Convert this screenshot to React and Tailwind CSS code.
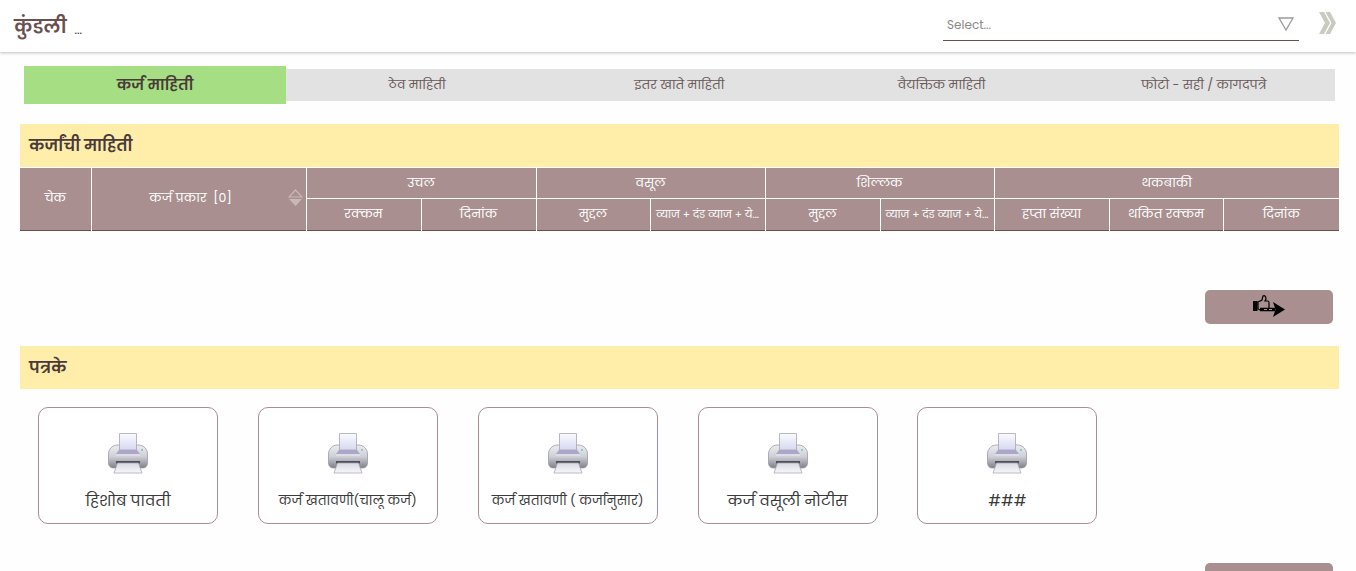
const FONT = "font-['Poppins','Noto_Sans','Liberation_Sans',sans-serif]";

const TABS = ["ठेव माहिती", "इतर खाते माहिती", "वैयक्तिक माहिती", "फोटो - सही / कागदपत्रे"];

const GROUPS = [
  { label: "उचल", span: 2 },
  { label: "वसूल", span: 2 },
  { label: "शिल्लक", span: 2 },
  { label: "थकबाकी", span: 3 },
];

const SUBHEADS = [
  { label: "रक्कम" },
  { label: "दिनांक" },
  { label: "मुद्दल" },
  { label: "व्याज + दंड व्याज + ये...", small: true },
  { label: "मुद्दल" },
  { label: "व्याज + दंड व्याज + ये...", small: true },
  { label: "हप्ता संख्या" },
  { label: "थकित रक्कम" },
  { label: "दिनांक" },
];

const REPORTS = [
  { label: "हिशोब पावती", text: "text-[15.3px]" },
  { label: "कर्ज खतावणी(चालू कर्ज)", text: "text-[12.8px]" },
  { label: "कर्ज खतावणी ( कर्जानुसार)", text: "text-[12.8px]" },
  { label: "कर्ज वसूली नोटीस", text: "text-[15.2px]" },
  { label: "###", text: "text-[15.2px]" },
];

function PrinterIcon() {
  return (
    <svg width="42" height="42" viewBox="0 0 42 42" className="block">
      <defs>
        <linearGradient id="paper" x1="0" y1="0" x2="0" y2="1">
          <stop offset="0" stopColor="#fbfbfe" />
          <stop offset="1" stopColor="#d5d8f0" />
        </linearGradient>
        <linearGradient id="body" x1="0" y1="0" x2="0" y2="1">
          <stop offset="0" stopColor="#ececf0" />
          <stop offset="0.5" stopColor="#cfcfd8" />
          <stop offset="1" stopColor="#7f7f8a" />
        </linearGradient>
        <linearGradient id="tray" x1="0" y1="0" x2="0" y2="1">
          <stop offset="0" stopColor="#d8d9e2" />
          <stop offset="1" stopColor="#f7f7fa" />
        </linearGradient>
      </defs>
      <path d="M1.5 22c0-5 4-9 9-9h21c5 0 9 4 9 9v9c0 3-2 5-5 5h-29c-3 0-5-2-5-5z" fill="url(#body)" stroke="#9a9aa4" strokeWidth="0.8" />
      <path d="M12.5 1.5h17V18h-17z" fill="url(#paper)" stroke="#a6a6b0" strokeWidth="0.8" />
      <path d="M9 22l3-4h18l3 4z" fill="#aaa7c8" />
      <path d="M9 22h24v2H9z" fill="#ddddE6" />
      <circle cx="35" cy="18" r="1" fill="#6fc7b5" />
      <path d="M9 29h24v2.5H9z" fill="#4f4f58" />
      <path d="M7 41l3.5-10h21L35 41z" fill="url(#tray)" stroke="#a2a2ac" strokeWidth="0.7" />
    </svg>
  );
}

function NextIcon() {
  return (
    <svg width="33" height="23" viewBox="0 0 33 23" className="block">
      {/* thumb */}
      <path d="M5 7l4-2 1-4c2-1 3 1 3 3l-1 2h3c1 0 1 1 1 2v7H7l-2-1z" fill="none" stroke="#000" strokeWidth="1.2" />
      <path d="M0 6h4.500v10H0z" fill="#000" />
      {/* arrow */}
      <path d="M7 14.500h15" stroke="#000" strokeWidth="3.500" />
      <path d="M11 14.500h3m2 0h3" stroke="#a98f8f" strokeWidth="1" />
      <path d="M20 7l12 7.500L20 22l2.500-7.500z" fill="#000" />
    </svg>
  );
}

function SectionTitle({ children }) {
  return (
    <div className="flex h-[43px] items-center bg-[#ffedaa] pl-[9px] pt-px text-[16px] font-semibold text-[#4a3a3a]">
      {children}
    </div>
  );
}

export default function App() {
  return (
    <div className={`${FONT} h-[571px] overflow-hidden bg-[#fefefe]`}>
      {/* Top bar */}
      <header className="flex h-[52px] items-center bg-white pl-[14px] shadow-[0_1px_3px_rgba(0,0,0,0.25)]">
        <h1 className="text-[19px] font-semibold leading-none text-[#6b5050]">कुंडली</h1>
        <span className="ml-[8px] mt-[10px] font-['Liberation_Sans',sans-serif] text-[9px] font-bold leading-none text-[#444444]">...</span>
        <div className="ml-auto mt-[-3px] flex h-[33px] w-[356px] items-center justify-between border-b border-[#6b4f4f] pl-1 pr-[5px]">
          <span className="mt-[2px] text-[12px] text-[#8a8a8a]">Select...</span>
          <svg width="16" height="14" viewBox="0 0 16 14">
            <path d="M1 1h14L8 13z" fill="none" stroke="#9a9a9a" strokeWidth="1.3" />
          </svg>
        </div>
        <svg width="19" height="24" viewBox="0 0 19 24" className="ml-[19px] mr-[19px] mt-[-6px]">
          <path d="M1 1h5l6 11-6 11H1l6-11z" fill="#c8cbc0" />
          <path d="M7.500 1h4.500l6 11-6 11H7.500l6-11z" fill="#c8cbc0" />
        </svg>
      </header>

      {/* Tabs */}
      <nav className="ml-[24px] mt-[14px] flex items-center">
        <div className="flex h-[38px] w-[262px] items-center justify-center bg-[#a6de84] text-[15px] font-semibold text-[#4a3a3a]">
          कर्ज माहिती
        </div>
        {TABS.map((tab) => (
          <div key={tab} className="flex h-[32px] w-[262.25px] items-center justify-center bg-[#e2e2e2] text-[12.5px] text-[#6b5a5a]">
            {tab}
          </div>
        ))}
      </nav>

      <main className="ml-[20px] mr-[17px]">
        {/* Loan info */}
        <section className="mt-[20px]">
          <SectionTitle>कर्जांची माहिती</SectionTitle>
          <table className="mt-px w-[1319px] table-fixed border-collapse border-b border-[#6b4f4f] text-center text-[12.5px] text-white">
            <colgroup>
              <col className="w-[71px]" />
              <col className="w-[215px]" />
              <col className="w-[115px]" />
              <col className="w-[115px]" />
              <col className="w-[114px]" />
              <col className="w-[115px]" />
              <col className="w-[115px]" />
              <col className="w-[114px]" />
              <col className="w-[115px]" />
              <col className="w-[114px]" />
              <col className="w-[116px]" />
            </colgroup>
            <thead>
              <tr className="h-[30px]">
                <th rowSpan={2} className="border-r border-white bg-[#a98f8f] font-normal">चेक</th>
                <th rowSpan={2} className="relative border-r border-white bg-[#a98f8f] pr-[16px] font-normal">
                  कर्ज प्रकार&nbsp; [0]
                  <svg width="15" height="18" viewBox="0 0 15 18" className="absolute right-[3px] top-[21px]">
                    <path d="M7.500 1L14 8H1z" fill="none" stroke="#c9b8b8" strokeWidth="1.2" />
                    <path d="M7.500 17L14 10H1z" fill="#c9b8b8" />
                  </svg>
                </th>
                {GROUPS.map((group) => (
                  <th key={group.label} colSpan={group.span} className="border-b border-r border-white bg-[#a98f8f] pt-px font-normal last:border-r-0">
                    {group.label}
                  </th>
                ))}
              </tr>
              <tr className="h-[32px]">
                {SUBHEADS.map((head, idx) => (
                  <th key={idx} className={`overflow-hidden whitespace-nowrap border-r border-white bg-[#a98f8f] pt-px font-normal last:border-r-0 ${head.small ? "text-[10.5px]" : ""}`}>
                    {head.label}
                  </th>
                ))}
              </tr>
            </thead>
          </table>
          <div className="mr-[6px] mt-[59px] flex justify-end">
            <button className="flex h-[34px] w-[128px] items-center justify-center rounded-[5px] bg-[#a98f8f]">
              <NextIcon />
            </button>
          </div>
        </section>

        {/* Reports */}
        <section className="mt-[22px]">
          <SectionTitle>पत्रके</SectionTitle>
          <div className="ml-[18px] mt-[18px] flex gap-[39.85px]">
            {REPORTS.map((report) => (
              <div key={report.label} className="flex h-[117px] w-[180px] flex-col items-center rounded-[10px] border border-[#a98f8f] bg-white pt-[24px] text-[#3a3a3a]">
                <PrinterIcon />
                <span className={`mt-[15px] leading-[24px] ${report.text}`}>{report.label}</span>
              </div>
            ))}
          </div>
          <div className="mr-[6px] mt-[39px] flex justify-end">
            <div className="h-[34px] w-[128px] rounded-[5px] bg-[#a98f8f]" />
          </div>
        </section>
      </main>
    </div>
  );
}
